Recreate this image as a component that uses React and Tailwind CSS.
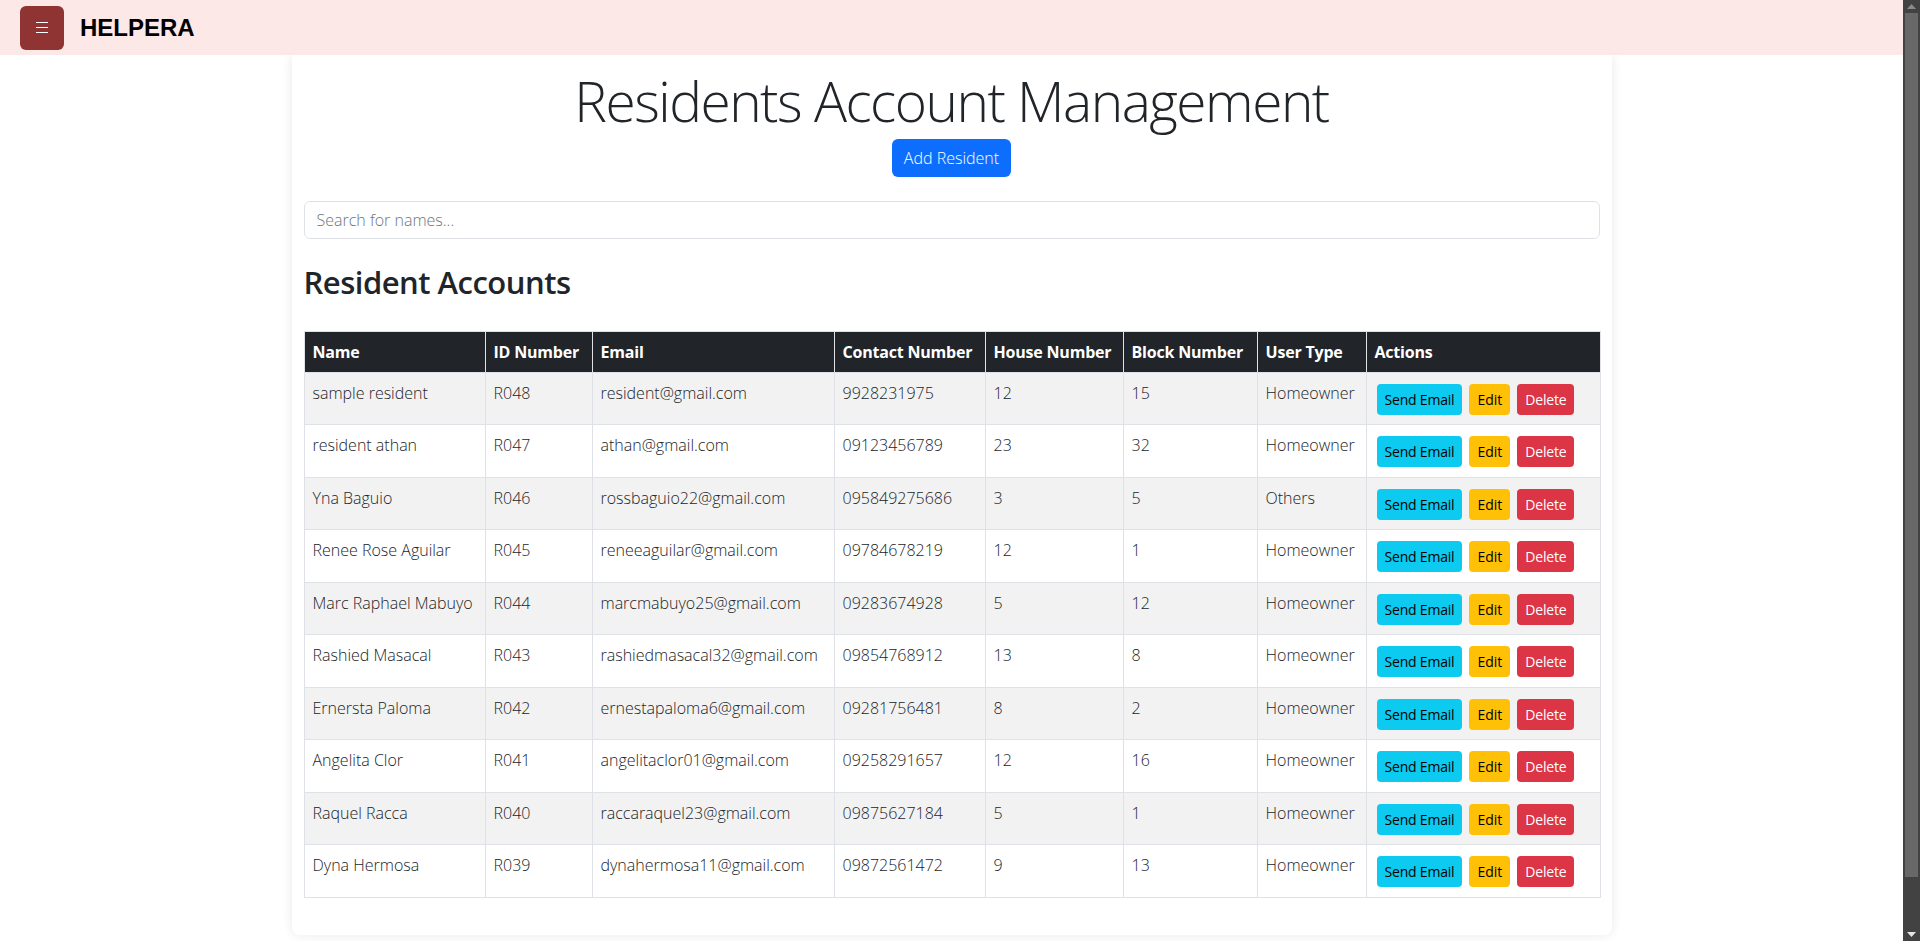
import React from "react";

const residents = [
  { name: "sample resident", id: "R048", email: "resident@gmail.com", contact: "9928231975", house: "12", block: "15", type: "Homeowner" },
  { name: "resident athan", id: "R047", email: "athan@gmail.com", contact: "09123456789", house: "23", block: "32", type: "Homeowner" },
  { name: "Yna Baguio", id: "R046", email: "rossbaguio22@gmail.com", contact: "095849275686", house: "3", block: "5", type: "Others" },
  { name: "Renee Rose Aguilar", id: "R045", email: "reneeaguilar@gmail.com", contact: "09784678219", house: "12", block: "1", type: "Homeowner" },
  { name: "Marc Raphael Mabuyo", id: "R044", email: "marcmabuyo25@gmail.com", contact: "09283674928", house: "5", block: "12", type: "Homeowner" },
  { name: "Rashied Masacal", id: "R043", email: "rashiedmasacal32@gmail.com", contact: "09854768912", house: "13", block: "8", type: "Homeowner" },
  { name: "Ernersta Paloma", id: "R042", email: "ernestapaloma6@gmail.com", contact: "09281756481", house: "8", block: "2", type: "Homeowner" },
  { name: "Angelita Clor", id: "R041", email: "angelitaclor01@gmail.com", contact: "09258291657", house: "12", block: "16", type: "Homeowner" },
  { name: "Raquel Racca", id: "R040", email: "raccaraquel23@gmail.com", contact: "09875627184", house: "5", block: "1", type: "Homeowner" },
  { name: "Dyna Hermosa", id: "R039", email: "dynahermosa11@gmail.com", contact: "09872561472", house: "9", block: "13", type: "Homeowner" },
];

const columns = [
  { label: "Name", width: "w-[181px]" },
  { label: "ID Number", width: "w-[107px]" },
  { label: "Email", width: "w-[242px]" },
  { label: "Contact Number", width: "w-[151px]" },
  { label: "House Number", width: "w-[138px]" },
  { label: "Block Number", width: "w-[134px]" },
  { label: "User Type", width: "w-[109px]" },
  { label: "Actions", width: "w-[234px]" },
];

// fake browser scrollbar on the right edge
const Scrollbar = () => (
  <div className="w-[17px] h-full bg-[#424242] flex flex-col items-center shrink-0">
    <div className="h-[13px] flex items-center justify-center">
      <svg width="9" height="5" viewBox="0 0 9 5">
        <path d="M0 5 L4.5 0 L9 5 Z" fill="#8a8a8a" />
      </svg>
    </div>
    <div className="w-[13px] h-[864px] bg-[#686868]" />
    <div className="flex-1" />
    <div className="h-[13px] flex items-center justify-center">
      <svg width="9" height="5" viewBox="0 0 9 5">
        <path d="M0 0 L9 0 L4.5 5 Z" fill="#e6e6e6" />
      </svg>
    </div>
  </div>
);

const cell = "px-2 py-2 leading-6 align-top border border-[#dee2e6] font-light";

const App = () => {
  return (
    <div className="h-[941px] w-full flex overflow-hidden bg-white font-['Open_Sans',sans-serif] text-[#212529]">
      <div className="flex-1 min-w-0 flex flex-col">
        {/* Navbar */}
        <nav className="h-[55px] bg-[#fde8e8] flex items-center pl-5 gap-4 shrink-0 relative z-10">
          <button className="w-[44px] h-[44px] rounded-md bg-[#8f3333] flex items-center justify-center">
            <svg width="12" height="11" viewBox="0 0 12 11">
              <rect x="0" y="0" width="12" height="1" fill="#ffffff" />
              <rect x="0" y="5" width="12" height="1" fill="#ffffff" />
              <rect x="0" y="10" width="12" height="1" fill="#ffffff" />
            </svg>
          </button>
          <span className="font-['Liberation_Sans',Arial,sans-serif] font-bold text-[24px] text-black leading-none">
            HELPERA
          </span>
        </nav>

        {/* Main card */}
        <main className="flex-1">
          <div className="w-[1320px] mx-auto bg-white rounded-b-lg shadow-[0_0_12px_rgba(0,0,0,0.09)] px-3 pt-3 pb-[37px]">
            <div className="flex flex-col items-center">
              <h1 className="text-[55px] font-light leading-[1.22] tracking-[-1.5px]">Residents Account Management</h1>
              <button className="mt-[5px] h-[38px] px-3 rounded-md bg-[#0d6efd] text-white text-[16px] font-light">
                Add Resident
              </button>
            </div>

            <input
              type="text"
              placeholder="Search for names..."
              className="mt-6 w-full h-[38px] px-3 border border-[#dee2e6] rounded-md text-[16px] font-light placeholder:text-[#6c757d] outline-none"
            />

            <h2 className="mt-6 text-[31px] font-semibold leading-[1.24] tracking-[-0.5px]">Resident Accounts</h2>

            <table className="mt-[29px] w-full table-fixed border-collapse text-[16px]">
              <thead>
                <tr className="bg-[#212529] text-white">
                  {columns.map((c) => (
                    <th
                      key={c.label}
                      className={`${c.width} text-left font-bold tracking-[-0.2px] px-2 py-2 leading-6 border border-[#dee2e6] whitespace-nowrap`}
                    >
                      {c.label}
                    </th>
                  ))}
                </tr>
              </thead>
              <tbody>
                {residents.map((r, i) => (
                  <tr key={r.id} className={i % 2 === 0 ? "bg-[#f2f2f2]" : "bg-white"}>
                    <td className={cell}>{r.name}</td>
                    <td className={cell}>{r.id}</td>
                    <td className={cell}>{r.email}</td>
                    <td className={cell}>{r.contact}</td>
                    <td className={cell}>{r.house}</td>
                    <td className={cell}>{r.block}</td>
                    <td className={cell}>{r.type}</td>
                    <td className="pl-[10px] pr-2 pt-[11px] pb-[9.5px] align-top border border-[#dee2e6]">
                      <div className="flex gap-[7px]">
                        <button className="h-[31px] px-2 rounded bg-[#0dcaf0] text-black text-[14px] tracking-[-0.2px]">Send Email</button>
                        <button className="h-[31px] px-2 rounded bg-[#ffc107] text-black text-[14px]">Edit</button>
                        <button className="h-[31px] px-2 rounded bg-[#dc3545] text-white text-[14px] tracking-[-0.2px]">Delete</button>
                      </div>
                    </td>
                  </tr>
                ))}
              </tbody>
            </table>
          </div>
        </main>
      </div>
      <Scrollbar />
    </div>
  );
};

export default App;
